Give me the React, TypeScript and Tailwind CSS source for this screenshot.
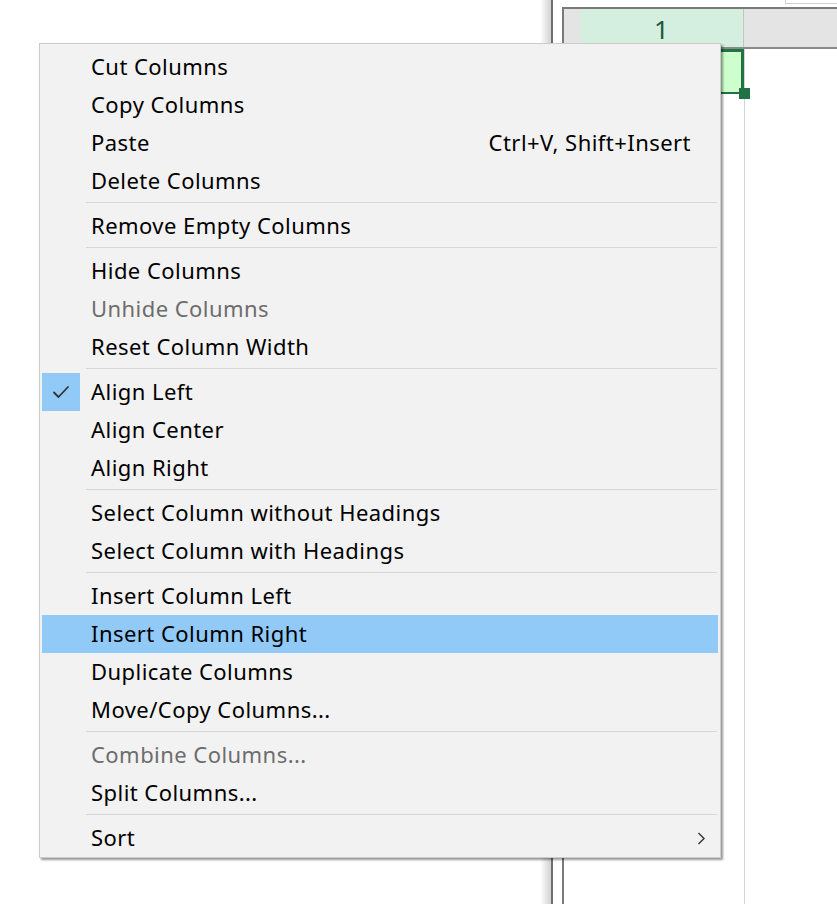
import React from "react";

type Item =
  | { kind: "item"; label: string; shortcut?: string; disabled?: boolean; checked?: boolean; hover?: boolean; sub?: boolean }
  | { kind: "sep" };

const items: Item[] = [
  { kind: "item", label: "Cut Columns" },
  { kind: "item", label: "Copy Columns" },
  { kind: "item", label: "Paste", shortcut: "Ctrl+V, Shift+Insert" },
  { kind: "item", label: "Delete Columns" },
  { kind: "sep" },
  { kind: "item", label: "Remove Empty Columns" },
  { kind: "sep" },
  { kind: "item", label: "Hide Columns" },
  { kind: "item", label: "Unhide Columns", disabled: true },
  { kind: "item", label: "Reset Column Width" },
  { kind: "sep" },
  { kind: "item", label: "Align Left", checked: true },
  { kind: "item", label: "Align Center" },
  { kind: "item", label: "Align Right" },
  { kind: "sep" },
  { kind: "item", label: "Select Column without Headings" },
  { kind: "item", label: "Select Column with Headings" },
  { kind: "sep" },
  { kind: "item", label: "Insert Column Left" },
  { kind: "item", label: "Insert Column Right", hover: true },
  { kind: "item", label: "Duplicate Columns" },
  { kind: "item", label: "Move/Copy Columns..." },
  { kind: "sep" },
  { kind: "item", label: "Combine Columns...", disabled: true },
  { kind: "item", label: "Split Columns..." },
  { kind: "sep" },
  { kind: "item", label: "Sort", sub: true },
];

function Check() {
  return (
    <svg width="18" height="14" viewBox="0 0 18 14" fill="none">
      <path d="M2 7.5 L6.5 12 L16 2" stroke="#333333" strokeWidth="1.8" strokeLinecap="round" strokeLinejoin="round" />
    </svg>
  );
}

function Chevron() {
  return (
    <svg width="9" height="13" viewBox="0 0 9 13" fill="none">
      <path d="M1.5 1 L7 6.5 L1.5 12" stroke="#333333" strokeWidth="1.4" />
    </svg>
  );
}

export default function App() {
  return (
    <div
      className="relative w-[837px] h-[904px] bg-white overflow-hidden flex"
      style={{ fontFamily: '"Noto Sans", "Open Sans", sans-serif' }}
    >
      <div className="w-[540px] h-full bg-white" />
      <div className="w-[11px] h-full bg-gradient-to-r from-white to-[#d2d2d2]" />
      <div className="w-[2px] h-full bg-[#6e6e6e]" />
      <div className="w-[9px] h-full bg-white" />
      <div className="flex-1 h-full flex flex-col">
        <div className="h-[7px] flex justify-end">
          <div className="w-[52px] h-[4px] border-l border-b border-[#cfcfcf] bg-white" />
        </div>
        <div className="flex-1 border-l-2 border-t-2 border-[#7a7a7a] flex flex-col">
          <div className="h-[40px] flex border-b-2 border-[#8a8a8a]">
            <div className="w-[16px] bg-[#e4e4e4]" />
            <div className="w-[163px] bg-[#d4efdf] flex items-center justify-center text-[26px] leading-none text-[#1b5a3a] pt-[2px]">1</div>
            <div className="w-px bg-[#c4c4c4]" />
            <div className="flex-1 bg-[#e4e4e4]" />
          </div>
          <div className="flex-1 flex">
            <div className="w-[16px] bg-white" />
            <div className="w-[164px] flex flex-col">
              <div className="relative h-[45px] bg-[#ccffcc] border-t-[3px] border-b-2 border-r-[3px] border-[#217346]">
                <div className="absolute -right-[9px] -bottom-[7px] w-[11px] h-[11px] bg-[#217346]" />
              </div>
            </div>
            <div className="w-px bg-[#d4d4d4]" />
            <div className="flex-1 bg-white" />
          </div>
        </div>
      </div>

      <div className="absolute left-[39px] top-[43px] w-[682px] h-[815px] border border-[#cccccc] bg-[#f2f2f2] shadow-[2px_2px_2px_rgba(0,0,0,0.4)] pt-[4px] px-px text-[22px] tracking-[0.45px] text-black">
        {items.map((it, i) =>
          it.kind === "sep" ? (
            <div key={i} className="h-[7px] pt-[1.5px] pl-[45px] pr-[2px]">
              <div className="h-px bg-[#d7d7d7]" />
            </div>
          ) : (
            <div
              key={i}
              className={
                "h-[38px] mx-px flex items-center " + (it.hover ? "bg-[#91c9f7]" : "")
              }
            >
              <div className={"w-[38px] h-[38px] flex items-center justify-center " + (it.checked ? "bg-[#91c9f7]" : "")}>
                {it.checked ? <Check /> : null}
              </div>
              <div className={"pl-[11px] pb-[2px] flex-1 leading-none " + (it.disabled ? "text-[#6d6d6d]" : "")}>{it.label}</div>
              {it.shortcut ? <div className="pr-[27px] pb-[2px] leading-none">{it.shortcut}</div> : null}
              {it.sub ? (
                <div className="pr-[12px] flex items-center">
                  <Chevron />
                </div>
              ) : null}
            </div>
          )
        )}
      </div>
    </div>
  );
}
